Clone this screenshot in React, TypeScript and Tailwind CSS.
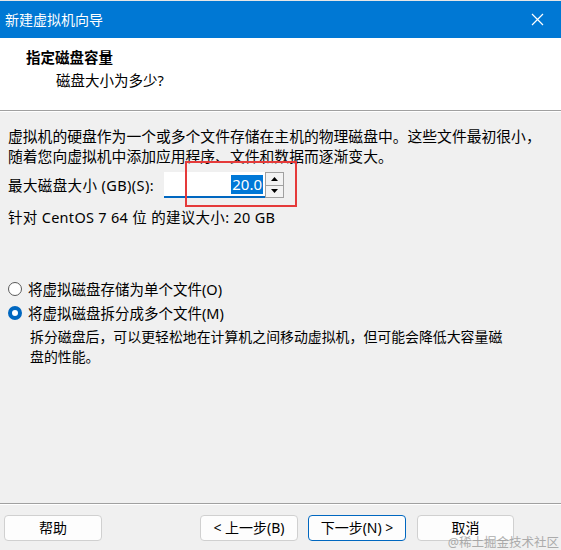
import React from "react";

const font = { fontFamily: '"Noto Sans", "Noto Sans CJK SC", sans-serif' };

function Radio({ checked }: { checked?: boolean }) {
  return checked ? (
    <span className="inline-block w-[14px] h-[14px] rounded-full border-[4px] border-[#0067c0] bg-white shrink-0" />
  ) : (
    <span className="inline-block w-[14px] h-[14px] rounded-full border border-[#5a5a5a] bg-white shrink-0" />
  );
}

export default function App() {
  return (
    <div className="relative w-[561px] h-[550px] bg-[#f0f0f0] text-[#000] overflow-hidden" style={font}>
      {/* title bar */}
      <div className="h-[38px] bg-[#0078d4] flex items-center justify-between pl-[5px] pr-[17px] border-t border-[#e6e6e6]">
        <span className="text-white text-[14px] leading-none">新建虚拟机向导</span>
        <svg width="13" height="13" viewBox="0 0 13 13">
          <path d="M1 1 L12 12 M12 1 L1 12" stroke="white" strokeWidth="1.2" />
        </svg>
      </div>
      {/* header */}
      <div className="h-[73px] bg-white pt-[9px] border-b border-[#a0a0a0]">
        <div className="pl-[26px] text-[14.5px] font-bold leading-[20px]">指定磁盘容量</div>
        <div className="pl-[56px] text-[14.5px] leading-[20px] mt-[3px]">磁盘大小为多少?</div>
      </div>
      <div className="h-px bg-white" />
      {/* body */}
      <div className="pl-[8px] pt-[14px] text-[14.8px] leading-[20px]">
        <div>虚拟机的硬盘作为一个或多个文件存储在主机的物理磁盘中。这些文件最初很小，</div>
        <div>随着您向虚拟机中添加应用程序、文件和数据而逐渐变大。</div>
        <div className="flex items-center mt-[6px] h-[26px]">
          <span className="w-[156px] text-[14.5px] tracking-[0.4px]">最大磁盘大小 (GB)(S):</span>
          <div className="relative flex">
            <div className="w-[101px] h-[26px] bg-white border-b-2 border-[#0067c0] flex items-center justify-end pr-[2px]">
              <span className="bg-[#0078d7] text-white text-[15px] leading-[19px] px-[1px]">20.0</span>
            </div>
            <div className="flex flex-col w-[19px] h-[26px] border border-[#a0a0a0] bg-[#f3f3f3]">
              <div className="flex-1 flex items-center justify-center border-b border-[#a0a0a0]">
                <svg width="7" height="4" viewBox="0 0 7 4"><path d="M0 4 L3.5 0 L7 4 Z" fill="#000" /></svg>
              </div>
              <div className="flex-1 flex items-center justify-center">
                <svg width="7" height="4" viewBox="0 0 7 4"><path d="M0 0 L7 0 L3.5 4 Z" fill="#000" /></svg>
              </div>
            </div>
            <div className="absolute left-[21px] top-[-11px] w-[112px] h-[46px] border-2 border-[#e53a3a]" />
          </div>
        </div>
        <div className="mt-[9px] text-[14.5px] tracking-[0.3px]">针对 CentOS 7 64 位 的建议大小: 20 GB</div>
        <div className="mt-[52px] flex items-center gap-[6px] h-[20px] text-[14.5px]">
          <Radio />
          <span>将虚拟磁盘存储为单个文件(O)</span>
        </div>
        <div className="mt-[4px] flex items-center gap-[6px] h-[20px] text-[14.5px]">
          <Radio checked />
          <span>将虚拟磁盘拆分成多个文件(M)</span>
        </div>
        <div className="pl-[22px] mt-[4px] text-[13.9px] leading-[20px] w-[500px]">
          拆分磁盘后，可以更轻松地在计算机之间移动虚拟机，但可能会降低大容量磁盘的性能。
        </div>
      </div>
      {/* footer */}
      <div className="absolute left-0 right-0 top-[503px] h-px bg-[#a0a0a0]" />
      <div className="absolute left-0 right-0 top-[504px] h-px bg-white" />
      <div className="absolute left-0 right-0 top-[515px] flex items-center text-[14px] leading-none">
        <button className="ml-[4px] w-[98px] h-[26px] bg-[#fdfdfd] border border-[#d0d0d0] rounded-[4px] leading-none">帮助</button>
        <button className="ml-[98px] w-[98px] h-[26px] bg-[#fdfdfd] border border-[#d0d0d0] rounded-[4px] leading-none">&lt; 上一步(B)</button>
        <button className="ml-[10px] w-[98px] h-[26px] bg-[#fdfdfd] border border-[#0067c0] rounded-[4px] leading-none">下一步(N) &gt;</button>
        <button className="ml-[11px] w-[97px] h-[26px] bg-[#fdfdfd] border border-[#d0d0d0] rounded-[4px] leading-none">取消</button>
      </div>
      <div className="absolute right-[2px] bottom-[1px] text-[12.5px] text-[#9a9a9a] opacity-80 leading-none">@稀土掘金技术社区</div>
    </div>
  );
}
